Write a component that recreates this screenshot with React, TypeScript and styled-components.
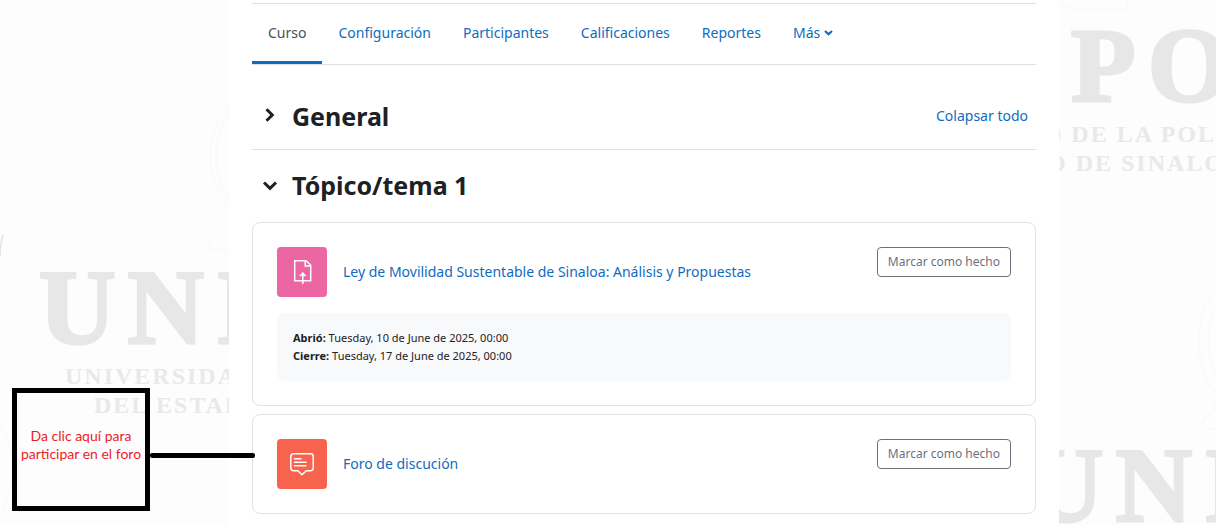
import React from "react";
import styled, { createGlobalStyle } from "styled-components";

const GlobalStyle = createGlobalStyle`
  *, *::before, *::after { box-sizing: border-box; }
  body {
    margin: 0;
    background: #fdfdfd;
    color: #1d2125;
    font-family: "Noto Sans", "Open Sans", sans-serif;
    font-size: 14px;
    line-height: 22px;
  }
  a { color: #0f6cbf; text-decoration: none; }
  h2, p, ul { margin: 0; padding: 0; }
`;

const Page = styled.div`
  position: relative;
  display: grid;
  grid-template-columns: minmax(0, 229fr) minmax(0, 830px) minmax(0, 157fr);
  min-height: 100vh;
  overflow: hidden;
`;

const Margin = styled.aside`
  overflow: hidden;
  height: 100%;
  contain: size;
`;

const Wordmark = styled.svg`
  display: block;
  overflow: visible;
  font-family: "Liberation Serif", serif;
  font-weight: 700;
`;

const BigLetters = styled.text`
  font-size: 106px;
  letter-spacing: 12px;
  fill: #e7e7e7;
  stroke: #e7e7e7;
  stroke-width: 3px;
`;

const SmallLetters = styled.text`
  font-size: 24px;
  letter-spacing: 2px;
  fill: #e9e9e9;
`;

const Main = styled.main`
  background: #fff;
  padding: 3px 23px 11px;
`;

const Tabs = styled.nav`
  display: flex;
  border-top: 1px solid #dee2e6;
  border-bottom: 1px solid #dee2e6;
`;

const Tab = styled.a<{ $active?: boolean }>`
  display: flex;
  align-items: center;
  gap: 4px;
  height: 60px;
  padding: 0 16px;
  border-bottom: 3px solid ${(p) => (p.$active ? "#0f6cbf" : "transparent")};
  color: ${(p) => (p.$active ? "#495057" : "#0f6cbf")};
`;

const SectionHeader = styled.header<{ $first?: boolean }>`
  display: flex;
  align-items: center;
  gap: 4px;
  padding: ${(p) => (p.$first ? "32px 8px 14px 0" : "16px 8px 18px 0")};
  border-bottom: ${(p) => (p.$first ? "1px solid #dee2e6" : "none")};
`;

const Toggle = styled.button`
  display: grid;
  place-items: center;
  width: 36px;
  height: 36px;
  padding: 0;
  border: 0;
  background: none;
  color: #1d2125;
`;

const SectionTitle = styled.h2`
  flex: 1;
  font-size: 25px;
  line-height: 38px;
  font-weight: 700;
`;

const ActivityList = styled.ul`
  display: grid;
  gap: 8px;
  padding: 0;
  list-style: none;
`;

const Card = styled.li`
  display: grid;
  gap: 16px;
  padding: 24px;
  border: 1px solid #dee2e6;
  border-radius: 8px;
`;

const CardRow = styled.div`
  display: flex;
  align-items: flex-start;
  gap: 16px;
`;

const IconTile = styled.span<{ $color: string }>`
  display: grid;
  place-items: center;
  flex: none;
  width: 50px;
  height: 50px;
  border-radius: 4px;
  background: ${(p) => p.$color};
`;

const ActivityName = styled.a`
  flex: 1;
  align-self: center;
`;

const DoneButton = styled.button`
  height: 30px;
  padding: 0 10px;
  border: 1px solid #6a737b;
  border-radius: 4px;
  background: #fff;
  color: #6a737b;
  font: inherit;
  font-size: 12px;
`;

const Dates = styled.div`
  padding: 16px;
  border-radius: 8px;
  background: #f8f9fa;
  font-size: 11px;
  line-height: 18px;
`;

const Note = styled.div`
  position: absolute;
  top: 388px;
  left: 12px;
  width: 138px;
  height: 123px;
  padding-top: 34px;
  border: 5px solid #000;
  color: #ed1c24;
  font-family: Lato, sans-serif;
  font-size: 14px;
  line-height: 18px;
  text-align: center;
  white-space: nowrap;
`;

const Pointer = styled.span`
  position: absolute;
  top: 453px;
  left: 150px;
  width: 105px;
  height: 5px;
  border-radius: 2px;
  background: #000;
`;

function Chevron({ down }: { down?: boolean }) {
  return (
    <svg width="16" height="16" viewBox="0 0 16 16" fill="none" stroke="currentColor" strokeWidth="3" aria-hidden="true">
      <path d={down ? "M2 5.5 8 11.3 14 5.5" : "M4.5 1.2 10.3 7 4.5 12.8"} />
    </svg>
  );
}

function CaretDown() {
  return (
    <svg width="9" height="7" viewBox="0 0 9 7" fill="none" stroke="currentColor" strokeWidth="2.2" aria-hidden="true">
      <path d="M1 2 4.5 5.2 8 2" />
    </svg>
  );
}

function FileUpIcon() {
  return (
    <svg width="24" height="24" viewBox="0 0 24 24" fill="none" stroke="#fff" strokeWidth="1.5" aria-hidden="true">
      <path d="M4.7 20.7V.8H16.2L20.7 5.3V20.7Z" />
      <path d="M15.2.8V6H20.7" />
      <path d="M12.8 24V14" />
      <path d="M9.6 15.8 12.8 12.3 16 15.8Z" fill="#fff" strokeWidth="0.6" />
    </svg>
  );
}

function ForumIcon() {
  return (
    <svg width="24" height="24" viewBox="0 0 24 24" fill="none" stroke="#fff" strokeWidth="1.5" strokeLinejoin="round" aria-hidden="true">
      <path d="M3.5 1.8H20.5Q23.2 1.8 23.2 4.5V16Q23.2 18.7 20.5 18.7H16.2L12 22.7 7.8 18.7H3.5Q.8 18.7 .8 16V4.5Q.8 1.8 3.5 1.8Z" />
      <path d="M4.5 6.8H11M4.5 10.3H16M4.5 13.8H16" strokeLinecap="round" />
    </svg>
  );
}

function LeftWordmark() {
  return (
    <Wordmark width="229" height="525" aria-hidden="true">
      <path d="M0 256Q0 242 3 234Q1 244 0 256" fill="#e4e4e4" stroke="#e4e4e4" />
      <g fill="none" stroke="#fafafa" strokeWidth="2">
        <path d="M229 108C204 128 204 184 229 206" />
        <path d="M229 116C212 136 212 178 229 198" />
        <path d="M208 250Q208 240 216 238Q222 230 229 232M208 250H229" />
        <path d="M0 424Q26 466 2 510" />
      </g>
      <BigLetters x="39" y="343">UNIPOL</BigLetters>
      <SmallLetters x="65" y="384">UNIVERSIDAD</SmallLetters>
      <SmallLetters x="94" y="413">DEL ESTADO</SmallLetters>
    </Wordmark>
  );
}

function RightWordmark() {
  return (
    <Wordmark width="157" height="525" aria-hidden="true">
      <g fill="none" stroke="#fafafa" strokeWidth="2">
        <path d="M0 7Q30 10 68 8V0" />
        <path d="M157 290C134 314 134 368 157 392" />
        <path d="M157 308C147 326 147 356 157 374" />
        <path d="M142 429Q144 414 153 414L157 400M142 429H157" />
      </g>
      <BigLetters x="12" y="101">POL</BigLetters>
      <SmallLetters x="-15" y="142">D DE LA POLICÍA</SmallLetters>
      <SmallLetters x="-12" y="171">O DE SINALOA</SmallLetters>
      <BigLetters x="-32" y="521">UNIPOL</BigLetters>
    </Wordmark>
  );
}

const tabs = ["Curso", "Configuración", "Participantes", "Calificaciones", "Reportes"];

export default function App() {
  return (
    <>
      <GlobalStyle />
      <Page>
        <Margin>
          <LeftWordmark />
        </Margin>
        <Main>
          <Tabs>
            {tabs.map((name, i) => (
              <Tab key={name} href="#" $active={i === 0}>
                {name}
              </Tab>
            ))}
            <Tab href="#">
              Más <CaretDown />
            </Tab>
          </Tabs>

          <SectionHeader $first>
            <Toggle aria-label="Expandir General">
              <Chevron />
            </Toggle>
            <SectionTitle>General</SectionTitle>
            <a href="#">Colapsar todo</a>
          </SectionHeader>

          <SectionHeader>
            <Toggle aria-label="Colapsar Tópico/tema 1">
              <Chevron down />
            </Toggle>
            <SectionTitle>Tópico/tema 1</SectionTitle>
          </SectionHeader>

          <ActivityList>
            <Card>
              <CardRow>
                <IconTile $color="#eb66a2">
                  <FileUpIcon />
                </IconTile>
                <ActivityName href="#">Ley de Movilidad Sustentable de Sinaloa: Análisis y Propuestas</ActivityName>
                <DoneButton>Marcar como hecho</DoneButton>
              </CardRow>
              <Dates>
                <p>
                  <strong>Abrió:</strong> Tuesday, 10 de June de 2025, 00:00
                </p>
                <p>
                  <strong>Cierre:</strong> Tuesday, 17 de June de 2025, 00:00
                </p>
              </Dates>
            </Card>
            <Card>
              <CardRow>
                <IconTile $color="#f7634d">
                  <ForumIcon />
                </IconTile>
                <ActivityName href="#">Foro de discución</ActivityName>
                <DoneButton>Marcar como hecho</DoneButton>
              </CardRow>
            </Card>
          </ActivityList>
        </Main>
        <Margin>
          <RightWordmark />
        </Margin>
        <Note>
          Da clic aquí para
          <br />
          participar en el foro
        </Note>
        <Pointer />
      </Page>
    </>
  );
}
